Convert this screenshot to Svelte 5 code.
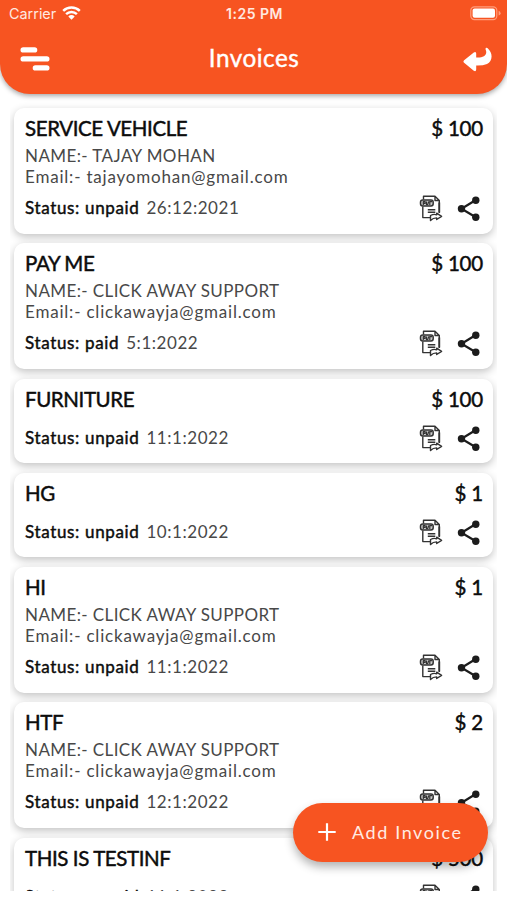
<script>
  const support = { name: 'CLICK AWAY SUPPORT', email: 'clickawayja@gmail.com' };
  const invoices = [
    { title: 'SERVICE VEHICLE', amount: 100, name: 'TAJAY MOHAN', email: 'tajayomohan@gmail.com', status: 'unpaid', date: '26:12:2021' },
    { title: 'PAY ME', amount: 100, ...support, status: 'paid', date: '5:1:2022' },
    { title: 'FURNITURE', amount: 100, status: 'unpaid', date: '11:1:2022' },
    { title: 'HG', amount: 1, status: 'unpaid', date: '10:1:2022' },
    { title: 'HI', amount: 1, ...support, status: 'unpaid', date: '11:1:2022' },
    { title: 'HTF', amount: 2, ...support, status: 'unpaid', date: '12:1:2022' },
    { title: 'THIS IS TESTINF', amount: 500, status: 'unpaid', date: '11:1:2022' }
  ];
</script>

<div class="screen">
  <header>
    <div class="statusbar">
      <div class="carrier">
        <span>Carrier</span>
        <svg width="19" height="15" viewBox="0 0 19 15" fill="none" stroke="#fff" stroke-width="2.5">
          <path d="M1.2 5.9a12 12 0 0 1 16.6 0M4.1 9.1a7.8 7.8 0 0 1 10.8 0" />
          <path d="M9.5 14.7 6.3 11.4a4.7 4.7 0 0 1 6.4 0z" fill="#fff" stroke="none" />
        </svg>
      </div>
      <div class="clock">1:25 PM</div>
      <svg class="battery" width="31" height="15" viewBox="0 0 31 15">
        <rect x=".8" y=".8" width="26" height="12.8" rx="3.6" fill="none" stroke="#ff9d7c" stroke-width="1.2" />
        <rect x="2.6" y="2.6" width="22.4" height="9.2" rx="2" fill="#fff" />
        <path d="M28.6 4.8q2 .8 2 2.4t-2 2.4z" fill="#ff9d7c" />
      </svg>
    </div>
    <div class="nav">
      <svg width="30" height="24" viewBox="0 0 30 24" fill="none" stroke="#fff" stroke-width="5.4" stroke-linecap="round">
        <path d="M3.2 2.9H14.6M3.2 11.9H26.8M15.4 20.9H26.8" />
      </svg>
      <h1>Invoices</h1>
      <svg width="30" height="26" viewBox="0 0 30 26" fill="#fff">
        <path d="M1.1 14.2 10.8 6.400q2.300-1.400 2.400 1.200v3.900c6.500.6 11.800-1.900 9.500-7.700-.6-1.900.7-2.700 2-1.500C30.500 7.500 29.400 15.500 24 18q-4.200 1.700-10.800 1.500V23.600q-.2 2.500-2.400 1.200L1.100 16.800Q-.2 15.500 1.100 14.200z" />
      </svg>
    </div>
  </header>

  <main>
    {#each invoices as inv}
      <article class:short={!inv.name}>
        <div class="row top">
          <h2>{inv.title}</h2>
          <strong>$ {inv.amount}</strong>
        </div>
        {#if inv.name}
          <p class="name">NAME:- {inv.name}</p>
          <p class="email">Email:- {inv.email}</p>
        {/if}
        <div class="row bottom">
          <div class="state"><b>Status: {inv.status}</b><span>{inv.date}</span></div>
          <div class="actions">
            <svg width="24" height="28" viewBox="0 0 24 28" fill="none" stroke="#333" stroke-width="1.4" stroke-linejoin="round">
              <path d="M4.500 5.500V2.300H16l4.300 4.100V19M16 2.300V6.500h4.300M3.800 12.500V23.600H11" />
              <path d="M20.300 8.500v10" stroke-width="1.800" />
              <rect x="1.500" y="6" width="12.700" height="6" rx="2.200" fill="#c9c9c9" stroke-width="1.500" />
              <path d="M4.300 10.900V7.700h1.800v1.700H4.300M7.500 7.400v3.200h1.200L9.800 7.400M10.800 10.900V7.600h2.200" stroke-width="1.200" />
              <path d="M8.800 15.800h7.500M8.800 18.200h7.500" />
              <path d="M11.500 26.500v-5q3.500-1.900 6.200-.7v-1.700l4.900 3.200-4.900 3.200v-1.600q-3.700 0-6.200 2.600z" fill="#fff" />
            </svg>
            <svg width="24" height="28" viewBox="0 0 24 28" fill="#1c1c1c">
              <path d="M18.8 6 4.500 14.700l14.300 8.500" fill="none" stroke="#1c1c1c" stroke-width="2.200" />
              <circle cx="18.800" cy="6.300" r="3.700" /><circle cx="4.500" cy="14.700" r="3.700" /><circle cx="18.800" cy="23.300" r="3.700" />
            </svg>
          </div>
        </div>
      </article>
    {/each}
  </main>

  <button>
    <svg width="18" height="18" viewBox="0 0 18 18" stroke="#fff" stroke-width="2.200"><path d="M9 .3v17.400M.3 9h17.400" /></svg>
    <span>Add Invoice</span>
  </button>
</div>

<style>
  .screen {
    position: relative;
    width: 507px;
    height: 900px;
    overflow: hidden;
    background: #fff;
    font-family: Lato, "Liberation Sans", sans-serif;
    color: #0c0c0c;
  }
  header {
    position: relative;
    z-index: 1;
    height: 94px;
    background: #f75421;
    border-radius: 0 0 30px 30px;
    color: #fff;
    box-shadow: 0 2px 5px rgba(0, 0, 0, 0.35);
  }
  .statusbar {
    display: grid;
    grid-template-columns: 1fr auto 1fr;
    align-items: center;
    height: 28px;
    padding: 0 6px 0 9px;
    font: 14.4px/28px Inter, sans-serif;
    color: #ffe9e0;
  }
  .carrier { display: flex; align-items: center; gap: 6px; }
  .carrier svg { margin-top: -3px; }
  .clock { margin-right: 1px; font-size: 14px; font-weight: 600; letter-spacing: 0.5px; }
  .battery { justify-self: end; margin-top: -2px; }
  .nav {
    display: flex;
    align-items: center;
    justify-content: space-between;
    height: 62px;
    padding: 0 14px 0 20px;
  }
  h1 {
    margin: -3px 5px 0 0;
    font-size: 24.3px;
    font-weight: 400;
    line-height: 30px;
    letter-spacing: 0.5px;
    -webkit-text-stroke: 0.4px;
  }
  main {
    display: flex;
    flex-direction: column;
    gap: 9.6px;
    height: 797px;
    margin: 0 10px;
    padding: 13.5px 4px 0;
    box-sizing: border-box;
    overflow: hidden;
  }
  article {
    flex: none;
    display: flex;
    flex-direction: column;
    box-sizing: border-box;
    height: 126px;
    padding: 7px 10px 0 11px;
    border-radius: 10px;
    background: #fff;
    box-shadow: 0 3px 9px rgba(0, 0, 0, 0.24);
  }
  article.short { height: 84.5px; }
  .row { display: flex; justify-content: space-between; }
  h2, strong {
    margin: 0;
    font-size: 20.5px;
    font-weight: 400;
    line-height: 26px;
    -webkit-text-stroke: 0.45px;
  }
  h2 { letter-spacing: -0.4px; }
  strong { letter-spacing: -0.2px; }
  p {
    margin: 0;
    font-size: 17px;
    line-height: 21px;
    color: #484848;
  }
  .name { margin-top: 4px; letter-spacing: 0.4px; }
  .email { letter-spacing: 0.8px; }
  .bottom { margin-top: 7px; align-items: flex-start; }
  .short .bottom { margin-top: 12px; }
  .state { display: flex; gap: 7px; font-size: 17px; line-height: 28px; }
  b { font-weight: 400; letter-spacing: 0.65px; -webkit-text-stroke: 0.45px; }
  .state span { letter-spacing: 0.55px; color: #484848; }
  .actions { display: flex; gap: 14px; margin-right: 2px; }
  button {
    position: absolute;
    z-index: 2;
    left: 293px;
    top: 803px;
    width: 195px;
    height: 59px;
    display: flex;
    align-items: center;
    gap: 16px;
    padding: 0 0 1px 25px;
    border: 0;
    border-radius: 30px;
    background: #f75421;
    color: #ffebe3;
    font: 18px Lato, sans-serif;
    letter-spacing: 1.6px;
    box-shadow: 0 5px 10px rgba(0, 0, 0, 0.3);
  }
</style>
